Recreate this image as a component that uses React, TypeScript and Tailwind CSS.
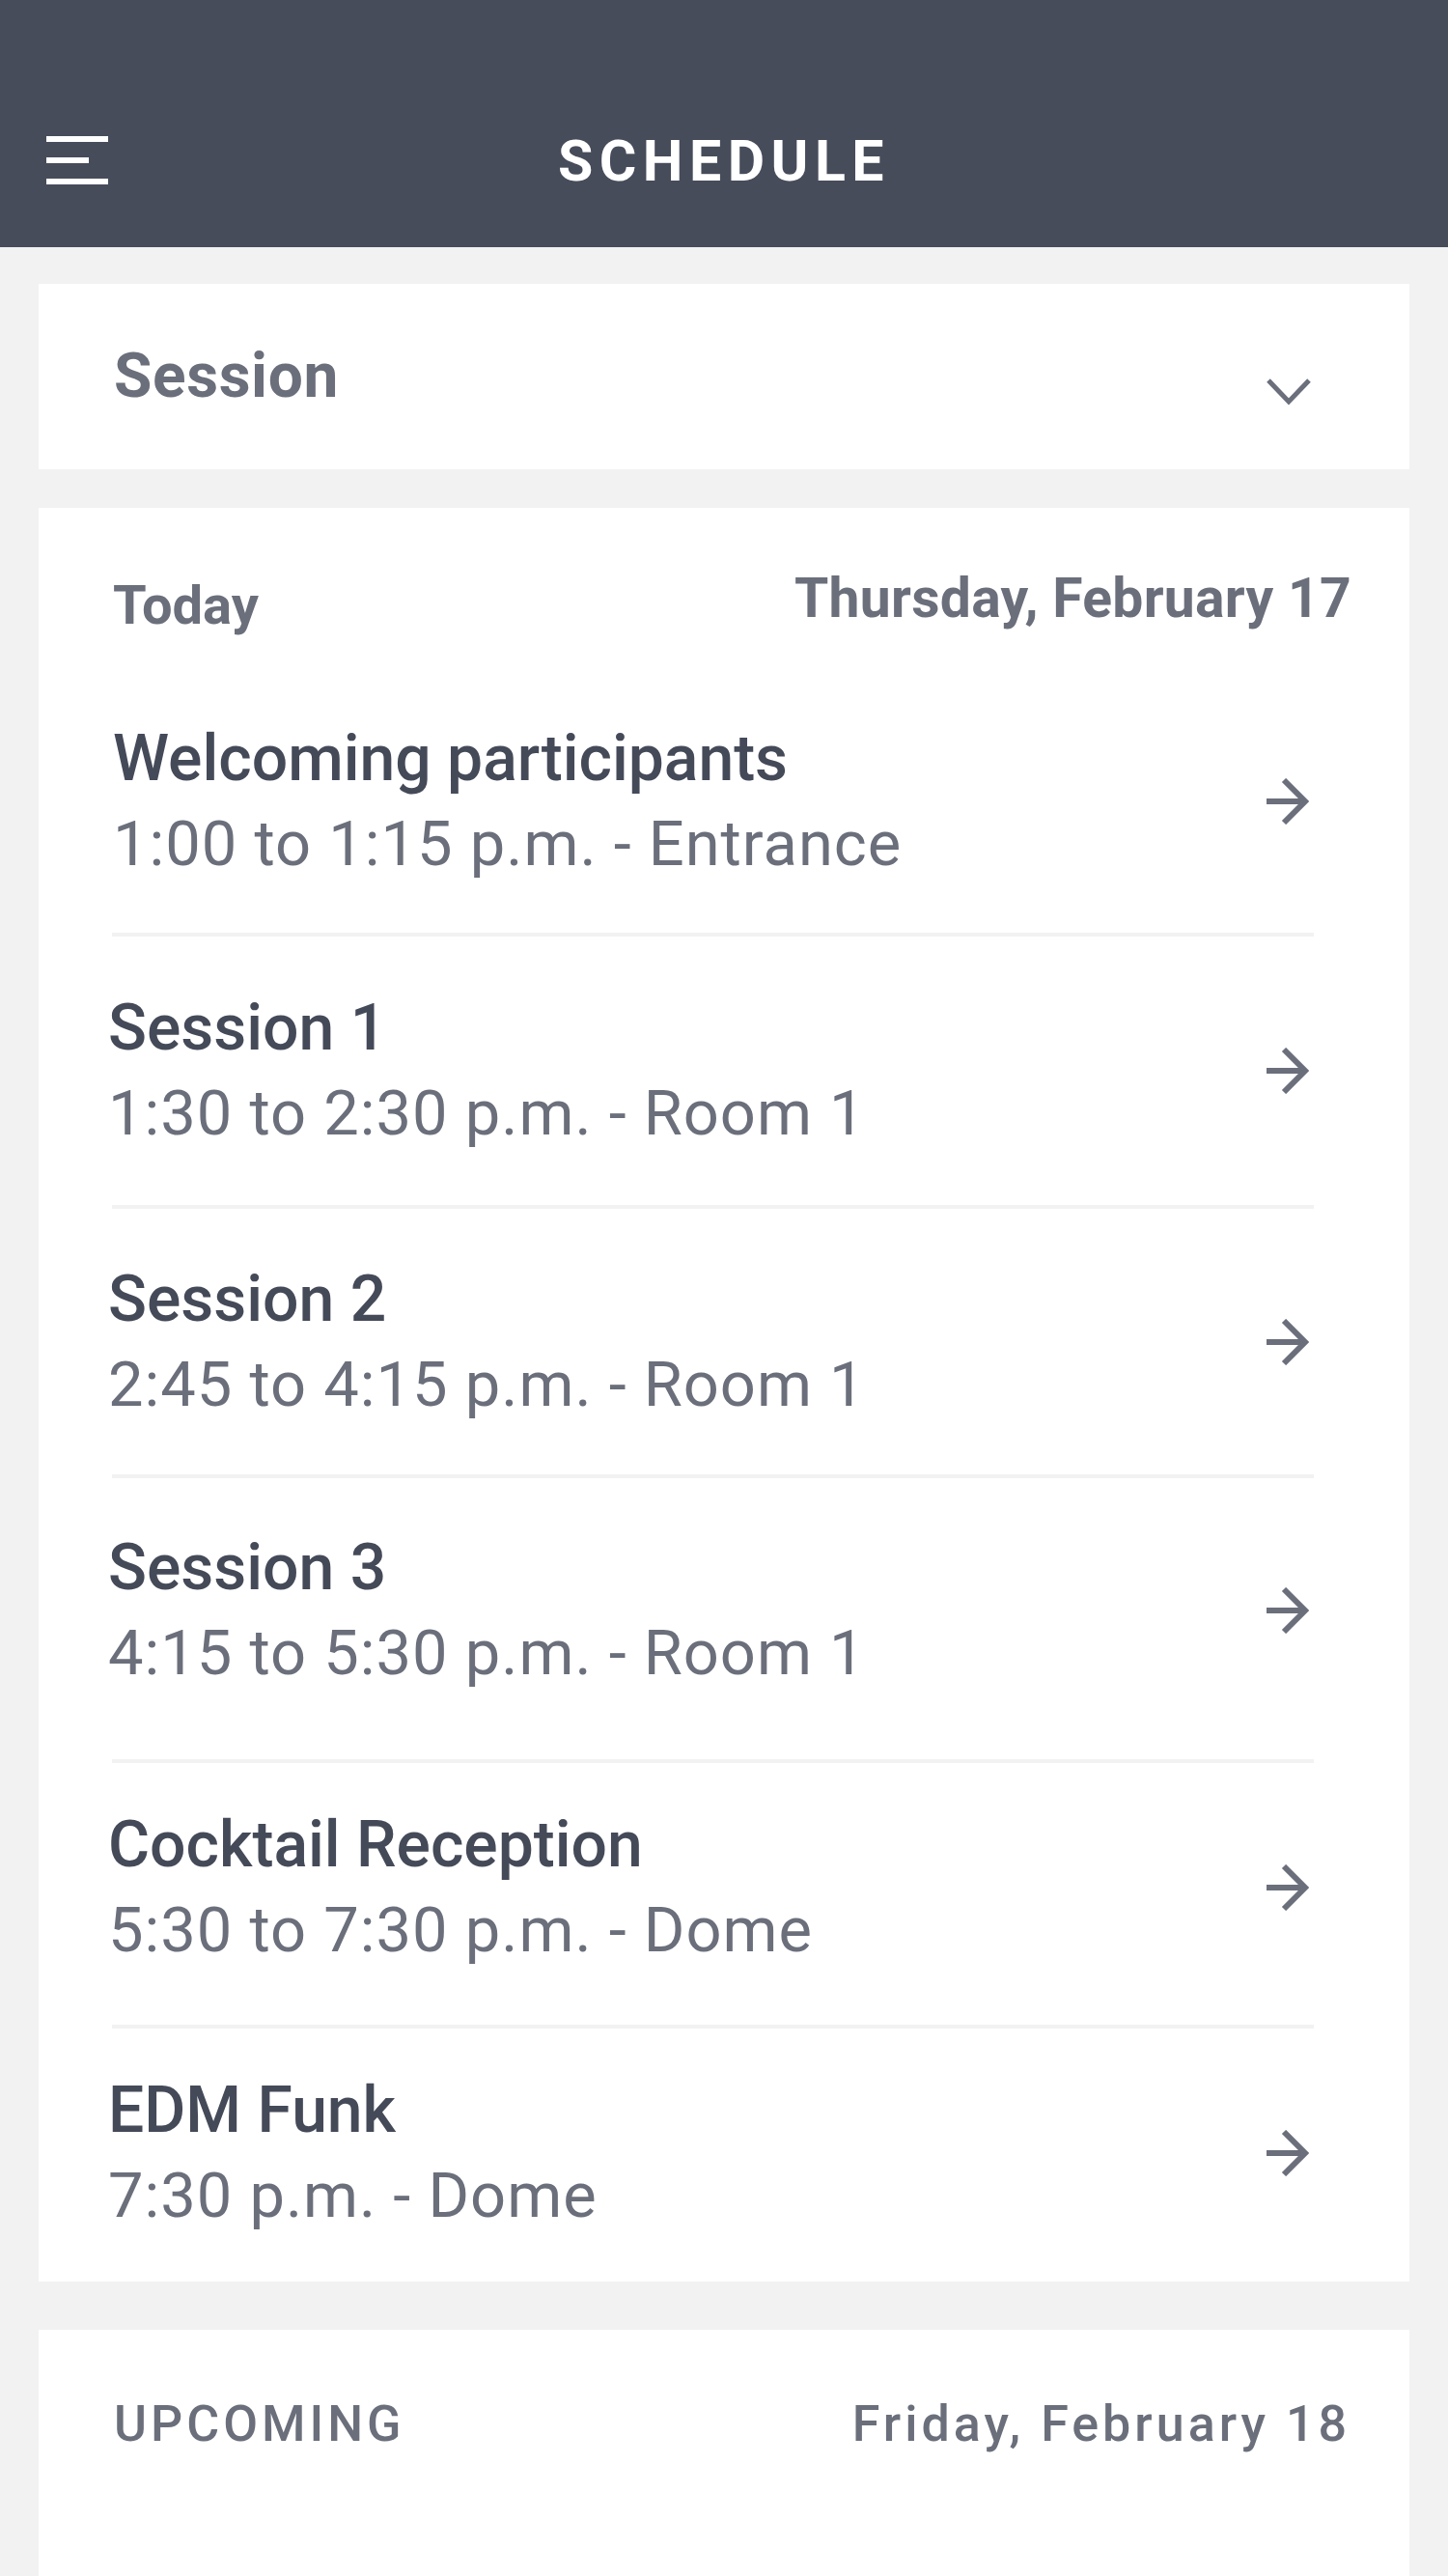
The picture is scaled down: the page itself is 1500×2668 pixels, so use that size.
import React from "react";

type Item = {
  title: string;
  time: string;
  pad: string;
  indent: string;
  last?: boolean;
};

const items: Item[] = [
  { title: "Welcoming participants", time: "1:00 to 1:15 p.m. - Entrance", pad: "pt-[51px] pb-[48px]", indent: "pl-[1px]" },
  { title: "Session 1", time: "1:30 to 2:30 p.m. - Room 1", pad: "pt-[51px] pb-[51px]", indent: "-ml-[4px]" },
  { title: "Session 2", time: "2:45 to 4:15 p.m. - Room 1", pad: "pt-[50px] pb-[49px]", indent: "-ml-[4px]" },
  { title: "Session 3", time: "4:15 to 5:30 p.m. - Room 1", pad: "pt-[49px] pb-[66px]", indent: "-ml-[4px]" },
  { title: "Cocktail Reception", time: "5:30 to 7:30 p.m. - Dome", pad: "pt-[41px] pb-[54px]", indent: "-ml-[4px]" },
  { title: "EDM Funk", time: "7:30 p.m. - Dome", pad: "pt-[41px] pb-[45px]", indent: "-ml-[4px]", last: true },
];

const ArrowIcon = () => (
  <svg width="44" height="48" viewBox="0 0 44 48" fill="none" className="shrink-0">
    <path d="M0 24H39" stroke="#6b6f7b" strokeWidth="6" />
    <path d="M18 2L40 24L18 46" stroke="#6b6f7b" strokeWidth="6" strokeLinejoin="miter" />
  </svg>
);

const ChevronIcon = () => (
  <svg width="46" height="30" viewBox="0 0 46 30" fill="none" className="shrink-0 mt-[32px]">
    <path d="M2 3L23 25L44 3" stroke="#6b6f7b" strokeWidth="5" />
  </svg>
);

export default function App() {
  return (
    <div className="min-h-screen bg-[#f2f2f2] font-['Roboto',sans-serif]">
      {/* top bar */}
      <header className="h-[256px] bg-[#474c5b] pt-[102px]">
        <div className="grid h-[128px] grid-cols-[1fr_auto_1fr] items-center">
          <div className="flex flex-col gap-[16px] pl-[48px]">
            <span className="block h-[6px] w-[64px] bg-white" />
            <span className="block h-[6px] w-[44px] bg-white" />
            <span className="block h-[6px] w-[64px] bg-white" />
          </div>
          <h1 className="text-[59px] font-bold leading-none tracking-[6.5px] text-white">SCHEDULE</h1>
          <div />
        </div>
      </header>

      <main className="flex flex-col px-[40px] pt-[38px]">
        {/* filter */}
        <div className="flex h-[192px] items-center justify-between bg-white pl-[78px] pr-[102px]">
          <span className="text-[64px] font-bold tracking-[0.6px] text-[#6b6f7b]">Session</span>
          <ChevronIcon />
        </div>

        {/* today */}
        <section className="mt-[40px] bg-white">
          <div className="flex h-[165px] items-start justify-between pl-[77px] pr-[60px] pt-[56px]">
            <span className="mt-[7px] text-[56px] font-bold leading-[76px] text-[#6b6f7b]">Today</span>
            <span className="text-[57px] font-bold leading-[76px] tracking-[0.3px] text-[#6b6f7b]">
              Thursday, February 17
            </span>
          </div>

          <ul className="ml-[76px] mr-[99px]">
            {items.map((item) => (
              <li
                key={item.title}
                className={`flex items-center justify-between ${item.pad} ${
                  item.last ? "" : "border-b-4 border-[#f2f2f2]"
                }`}
              >
                <div className={`flex flex-col ${item.indent}`}>
                  <span className="text-[66px] font-medium leading-[88px] text-[#454a59]">{item.title}</span>
                  <span className="text-[65px] leading-[88px] tracking-[1px] text-[#6b6f7b]">{item.time}</span>
                </div>
                <div className="mr-[5px]">
                  <ArrowIcon />
                </div>
              </li>
            ))}
          </ul>
        </section>

        {/* upcoming */}
        <section className="mt-[50px] h-[258px] bg-white">
          <div className="flex items-start justify-between pl-[78px] pr-[61px] pt-[67px]">
            <span className="text-[52px] font-medium leading-[62px] tracking-[4px] text-[#6b6f7b]">UPCOMING</span>
            <span className="text-[52px] font-medium leading-[62px] tracking-[4px] text-[#6b6f7b]">
              Friday, February 18
            </span>
          </div>
        </section>
      </main>
    </div>
  );
}
